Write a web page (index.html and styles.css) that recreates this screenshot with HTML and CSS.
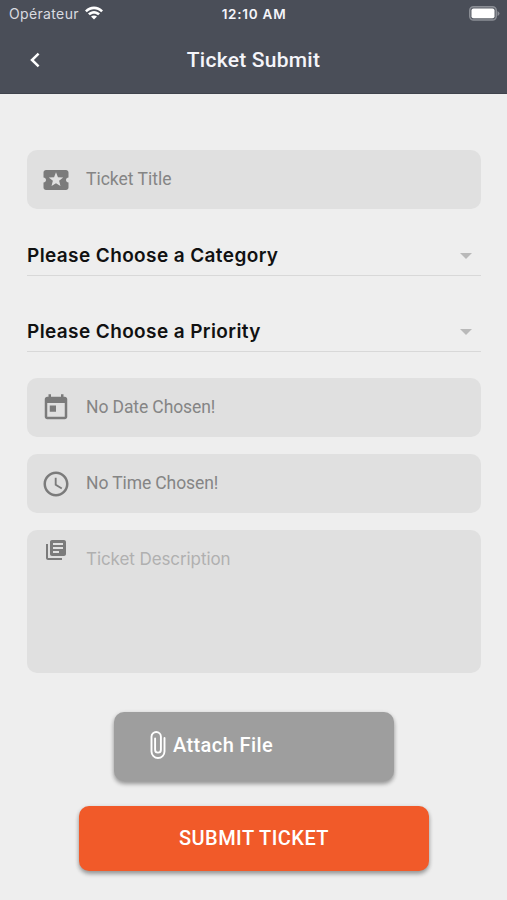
FILE: index.html
```html
<!DOCTYPE html>
<html lang="en">
<head>
<meta charset="utf-8">
<title>Ticket Submit</title>
<link rel="stylesheet" href="styles.css">
</head>
<body>
<header class="header">
  <div class="status">
    <div class="carrier"><span class="carrier-name">Opérateur</span>
      <svg class="wifi" viewBox="0 0 18 14"><path d="M0 4.500C5-.8 13-.8 18 4.500L16.200 6.300C12.200 2.300 5.800 2.300 1.800 6.300ZM3 7.500C6.500 4.100 11.500 4.100 15 7.500L13.200 9.300C10.800 7.100 7.200 7.100 4.800 9.300ZM6 10.500C7.800 9 10.200 9 12 10.500L9 13.500Z"/></svg>
    </div>
    <span class="clock">12:10 AM</span>
    <svg class="battery" viewBox="0 0 31 15"><rect x=".7" y=".7" width="26.600" height="13.300" rx="3.800"/><rect class="charge" x="2.500" y="2.500" width="23" height="9.700" rx="2"/><path d="M28.500 5v5q2-1 2-2.500t-2-2.500z"/></svg>
  </div>
  <nav class="navbar">
    <svg class="back" viewBox="0 0 12 16"><path d="M9.600 1.600 3 8l6.600 6.400"/></svg>
    <h1 class="title">Ticket Submit</h1>
  </nav>
</header>
<main class="form">
  <div class="field">
    <svg class="icon" viewBox="0 0 24 24"><path d="M20 12c0-1.100.9-2 2-2V6c0-1.100-.9-2-2-2H4c-1.100 0-1.990.9-1.990 2v4c1.100 0 1.990.9 1.990 2s-.89 2-2 2v4c0 1.100.9 2 2 2h16c1.100 0 2-.9 2-2v-4c-1.100 0-2-.9-2-2zm-4.420 4.800L12 14.500l-3.580 2.300 1.080-4.120-3.290-2.690 4.240-.25L12 5.800l1.540 3.950 4.240.25-3.290 2.690 1.090 4.110z"/></svg>
    <span class="label title-label">Ticket Title</span>
  </div>
  <div class="select"><span class="category">Please Choose a Category</span><svg class="caret" viewBox="0 0 12 6"><path d="M0 0h12L6 6z"/></svg></div>
  <div class="select second"><span class="priority">Please Choose a Priority</span><svg class="caret" viewBox="0 0 12 6"><path d="M0 0h12L6 6z"/></svg></div>
  <div class="field date">
    <svg class="icon" viewBox="0 0 24 24"><path d="M19 3h-1V1h-2v2H8V1H6v2H5c-1.110 0-1.990.9-1.990 2L3 19c0 1.100.89 2 2 2h14c1.100 0 2-.9 2-2V5c0-1.100-.9-2-2-2zm0 16H5V8h14v11zM7 10h5v5H7z"/></svg>
    <span class="label date-label">No Date Chosen!</span>
  </div>
  <div class="field time">
    <svg class="icon" viewBox="0 0 24 24"><path d="M11.990 2C6.470 2 2 6.480 2 12s4.470 10 9.990 10C17.520 22 22 17.520 22 12S17.520 2 11.990 2zM12 20c-4.420 0-8-3.580-8-8s3.580-8 8-8 8 3.580 8 8-3.580 8-8 8zm.5-13H11v6l5.250 3.150.75-1.230-4.500-2.670z"/></svg>
    <span class="label time-label">No Time Chosen!</span>
  </div>
  <div class="field description">
    <svg class="icon small" viewBox="0 0 24 24"><path d="M4 6H2v14c0 1.100.9 2 2 2h14v-2H4V6zm16-4H8c-1.100 0-2 .9-2 2v12c0 1.100.9 2 2 2h12c1.100 0 2-.9 2-2V4c0-1.100-.9-2-2-2zm-1 9H9V9h10v2zm-4 4H9v-2h6v2zm4-8H9V5h10v2z"/></svg>
    <span class="hint">Ticket Description</span>
  </div>
  <button class="button attach"><svg class="clip" viewBox="0 0 16 28"><path d="M14.500 7V20.500a6.500 6.500 0 0 1-13 0V5.700a4.700 4.700 0 0 1 9.400 0V18.700a2.900 2.900 0 0 1-5.800 0V7.500"/></svg><span>Attach File</span></button>
  <button class="button submit"><span>SUBMIT TICKET</span></button>
</main>
</body>
</html>
```
FILE: styles.css
```css
* { box-sizing: border-box; }
body { margin: 0; height: 900px; background: #eeeeee; font-family: Roboto, sans-serif; overflow: hidden; }
svg { display: block; flex: none; }
span, h1 { white-space: nowrap; }
.header { height: 94px; background: #4a4e58; border-bottom: 1px solid #3f434c; color: #f5f5fa; }
.status { height: 28px; display: grid; grid-template-columns: 1fr auto 1fr; align-items: center; padding: 0 7px 0 9px; font-family: Inter, sans-serif; font-size: 14px; }
.carrier { display: flex; align-items: center; gap: 6px; color: #d9dbe0; }
.carrier-name { letter-spacing: .35px; margin-top: -1px; }
.wifi { width: 18px; height: 14px; fill: #fff; margin-top: -2px; }
.clock { font-weight: 600; font-size: 13.5px; letter-spacing: .75px; margin: 0 0 1px -1px; }
.battery { width: 31px; height: 15px; justify-self: end; margin-top: -2px; fill: #8b8e95; }
.battery rect:first-child { fill: #5c6069; stroke: #8b8e95; stroke-width: 1.4; }
.battery .charge { fill: #fff; }
.navbar { height: 64px; display: grid; grid-template-columns: 1fr auto 1fr; align-items: center; }
.back { width: 12px; height: 16px; margin-left: 29px; fill: none; stroke: #fff; stroke-width: 2.5; }
.title { margin: 0; font-size: 21px; font-weight: 500; letter-spacing: .25px; }
.form { padding: 56px 26px 0 27px; display: flex; flex-direction: column; }
.field { height: 59px; border-radius: 10px; background: #e0e0e0; display: flex; align-items: center; padding-left: 14px; }
.icon { width: 30px; height: 30px; fill: #7b7b7b; }
.label { margin: -2px 0 0 15px; font-size: 17.5px; color: #858585; }
.date-label, .time-label { letter-spacing: -.1px; }
.select { height: 67px; border-bottom: 1px solid #d8d8d8; display: flex; align-items: flex-end; justify-content: space-between; padding: 0 9px 7px 0; font: 600 19px/24px Inter, sans-serif; letter-spacing: .39px; color: #111; }
.select.second { height: 76px; }
.caret { width: 12px; height: 6px; fill: #b9b9b9; margin-bottom: 9px; }
.date { margin-top: 26px; }
.time { margin-top: 17px; }
.description { margin-top: 17px; height: 143px; align-items: flex-start; }
.small { width: 24px; height: 24px; margin: 8px 3px 0; }
.hint { margin: 17px 0 0 15px; font: 17px/24px Inter, sans-serif; letter-spacing: -.08px; color: #b0b0b0; }
.button { border: 0; padding: 0; border-radius: 10px; align-self: center; display: flex; align-items: center; justify-content: center; color: #fff; font: 500 20px/24px Roboto, sans-serif; letter-spacing: .45px; box-shadow: 0 3px 4px rgba(0,0,0,.32), 0 1px 5px rgba(0,0,0,.1); }
.attach { width: 280px; height: 69px; margin-top: 38.5px; background: #9e9e9e; justify-content: flex-start; padding: 0 0 2px 36px; gap: 7px; letter-spacing: .4px; }
.clip { width: 16px; height: 28px; fill: none; stroke: #fff; stroke-width: 1.9; stroke-linecap: round; }
.submit { width: 350px; height: 65px; margin-top: 25.5px; padding-bottom: 1px; background: #f15a29; }
```
